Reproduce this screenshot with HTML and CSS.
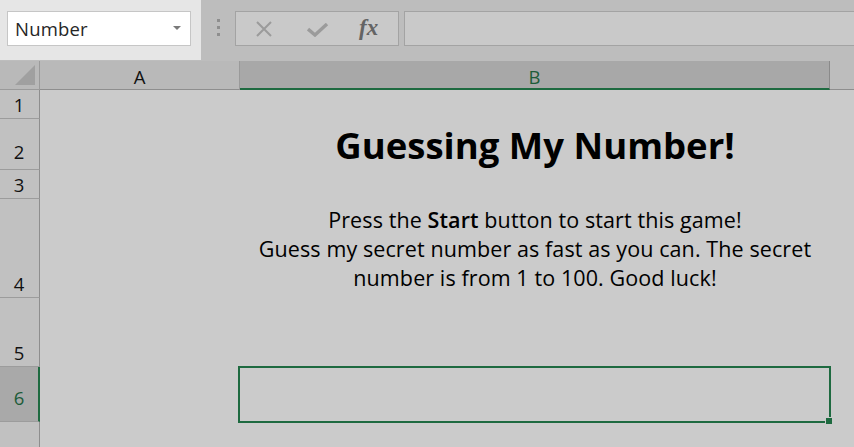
FILE: index.html
```html
<!DOCTYPE html>
<html>
<head>
<meta charset="utf-8">
<link rel="stylesheet" href="styles.css">
</head>
<body>
<div class="app">
  <div class="topbar">
    <div class="namearea">
      <div class="namebox">
        <span class="namebox-text">Number</span>
        <svg class="dd" width="8" height="4" viewBox="0 0 8 4"><polygon points="0,0 8,0 4,4" fill="#7a7a7a"/></svg>
      </div>
    </div>
    <div class="grip"><i></i><i></i><i></i></div>
    <div class="fbtns">
      <svg class="ico" width="18" height="16" viewBox="0 0 18 16"><path d="M2 1 L16 15 M16 1 L2 15" stroke="#9b9b9b" stroke-width="2" fill="none"/></svg>
      <svg class="ico" width="22" height="14" viewBox="0 0 22 14"><path d="M1 6 L8 12 L20 1" stroke="#9b9b9b" stroke-width="3.4" fill="none"/></svg>
      <span class="fx">fx</span>
    </div>
    <div class="finput"></div>
  </div>
  <div class="sheet">
    <div class="corner"><svg width="39" height="28" viewBox="0 0 39 28"><polygon points="15,24 35,24 35,4" fill="#a0a0a0"/></svg></div>
    <div class="colh">A</div>
    <div class="colh sel">B</div>
    <div class="colh rest"></div>

    <div class="rowh r1">1</div>
    <div class="rowh r2 lift">2</div>
    <div class="rowh r3">3</div>
    <div class="rowh r4">4</div>
    <div class="rowh r5">5</div>
    <div class="rowh r6 sel lift">6</div>
    <div class="rowh r7"></div>

    <div class="cell title"><p class="txt">Guessing My Number!</p></div>
    <div class="cell intro"><p class="txt">Press the <b>Start</b> button to start this game!<br>Guess my secret number as fast as you can. The secret<br>number is from 1 to 100. Good luck!</p></div>
    <div class="cell active"><span class="selbox"></span><span class="handle"></span></div>
  </div>
</div>
</body>
</html>
```

FILE: styles.css
```css
html, body {
  margin: 0;
  padding: 0;
}
body {
  width: 854px;
  height: 447px;
  overflow: hidden;
  background: #cbcbcb;
  font-family: "Open Sans", "Noto Sans", sans-serif;
}
.app {
  display: flex;
  flex-direction: column;
  height: 447px;
}
.topbar {
  height: 61px;
  flex: none;
  display: flex;
  align-items: flex-start;
  background: #bdbdbd;
}
.namearea {
  width: 201px;
  height: 60px;
  box-sizing: border-box;
  padding: 11px 10px 0 7px;
  background: #e6e6e6;
}
.namebox {
  height: 35px;
  box-sizing: border-box;
  border: 1px solid #c6c6c6;
  background: #ffffff;
  display: flex;
  align-items: center;
  justify-content: space-between;
  padding: 0 9px 0 7px;
}
.namebox-text {
  font-size: 18.5px;
  color: #262626;
  letter-spacing: 0.2px;
}
.dd {
  margin-top: -2px;
}
.grip {
  width: 34px;
  display: flex;
  flex-direction: column;
  align-items: center;
  gap: 4px;
  padding-top: 19px;
}
.grip i {
  display: block;
  width: 3px;
  height: 3px;
  background: #8e8e8e;
}
.fbtns {
  margin-top: 11px;
  width: 164px;
  height: 35px;
  box-sizing: border-box;
  border: 1px solid #a3a3a3;
  background: #c9c9c9;
  display: flex;
  align-items: center;
  padding: 0 0 0 19px;
}
.fbtns .ico:nth-child(1) { margin-right: 34px; }
.fbtns .ico:nth-child(2) { margin-right: 30px; margin-top: 2px; }
.fx {
  font-family: "Liberation Serif", serif;
  font-style: italic;
  font-weight: bold;
  font-size: 23px;
  color: #646464;
  margin-top: -2px;
}
.finput {
  margin-top: 11px;
  margin-left: 5px;
  flex: 1;
  height: 35px;
  box-sizing: border-box;
  border: 1px solid #a3a3a3;
  border-right: none;
  background: #c9c9c9;
}
.sheet {
  flex: 1;
  display: grid;
  grid-template-columns: 40px 200px 590px 1fr;
  grid-template-rows: 29px 29px 51px 29px 99px 69px 55px 1fr;
  background: #cbcbcb;
}
.corner {
  background: #b9b9b9;
  border-right: 1px solid #9a9a9a;
  border-bottom: 1px solid #9a9a9a;
  box-sizing: border-box;
  display: flex;
}
.colh {
  background: #b9b9b9;
  border-right: 1px solid #9a9a9a;
  border-bottom: 1px solid #8e8e8e;
  box-sizing: border-box;
  display: flex;
  justify-content: center;
  align-items: center;
  font-size: 18.5px;
  color: #111;
  padding-top: 2px;
}
.colh.sel {
  background: #a8a8a8;
  color: #1d5c39;
  border-right: 1px solid #8a8a8a;
  border-bottom: 2px solid #1e6a40;
  padding-top: 3px;
}
.colh.rest {
  background: #bdbdbd;
  border-right: none;
}
.rowh {
  grid-column: 1;
  background: #c1c1c1;
  border-right: 1px solid #8e8e8e;
  border-bottom: 1px solid #9c9c9c;
  box-sizing: border-box;
  display: flex;
  justify-content: center;
  align-items: flex-end;
  font-size: 18.5px;
  line-height: 20px;
  color: #111;
  padding-bottom: 3px;
  padding-right: 1px;
}
.rowh.lift { padding-bottom: 7px; }
.rowh.r6.lift { padding-bottom: 13px; }
.rowh.r7 { border-bottom: none; }
.rowh.sel {
  background: #a9a9a9;
  color: #1d5c39;
  border-right: 2px solid #1e6a40;
  padding-right: 0;
}
.r1 { grid-row: 2; }
.r2 { grid-row: 3; }
.r3 { grid-row: 4; }
.r4 { grid-row: 5; }
.r5 { grid-row: 6; }
.r6 { grid-row: 7; }
.r7 { grid-row: 8; }

.cell {
  grid-column: 3;
  display: flex;
  align-items: center;
  justify-content: center;
  text-align: center;
  color: #000;
}
.txt {
  margin: 0;
  white-space: nowrap;
}
.title {
  grid-row: 3;
  font-weight: bold;
  font-size: 36.5px;
  line-height: 44px;
  padding-top: 1px;
}
.intro {
  grid-row: 5;
  font-size: 21.5px;
  line-height: 29px;
  letter-spacing: 0.1px;
}
.intro b { font-weight: 600; }
.active {
  grid-row: 7;
  position: relative;
}
.selbox {
  position: absolute;
  top: -1px;
  left: -2px;
  right: -1px;
  bottom: -1px;
  border: 2px solid #1e6a40;
}
.handle {
  position: absolute;
  width: 6px;
  height: 6px;
  right: -2px;
  bottom: -2px;
  background: #1e6a40;
  box-shadow: 0 0 0 1px #cbcbcb;
}
```
